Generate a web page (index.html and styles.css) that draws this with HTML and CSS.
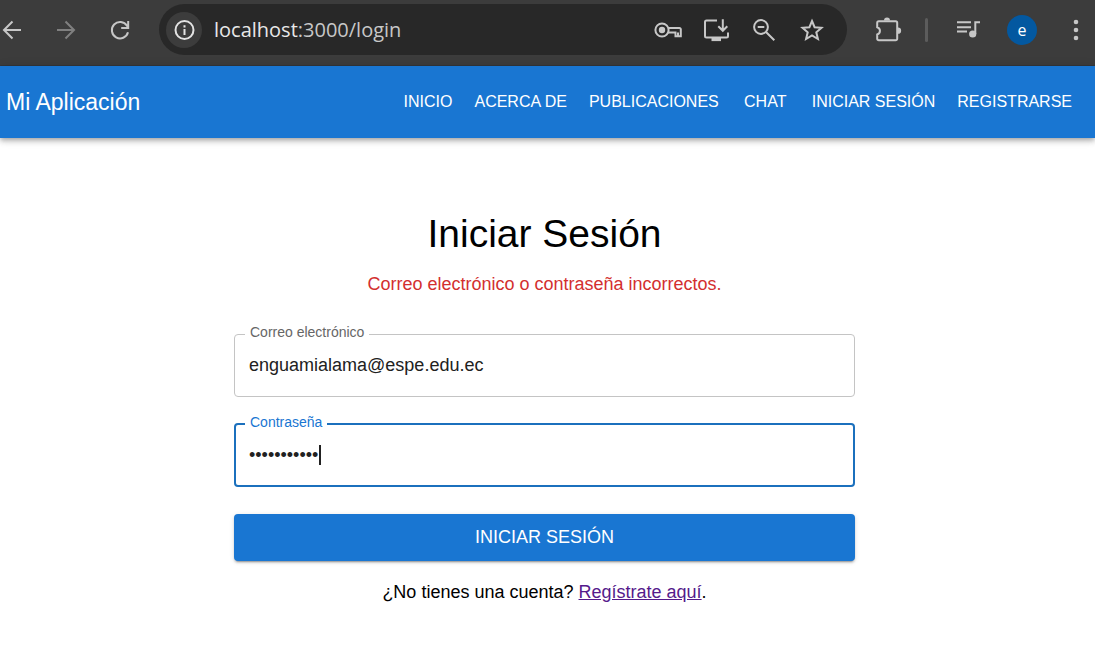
FILE: index.html
```html
<!DOCTYPE html>
<html lang="es">
<head>
<meta charset="utf-8">
<meta name="viewport" content="width=device-width, initial-scale=1">
<title>Iniciar Sesión - Mi Aplicación</title>
<link rel="stylesheet" href="styles.css">
</head>
<body>
<div class="browser-bar">
  <div class="history">
    <button class="icon-btn" type="button" aria-label="Atrás">
      <svg class="icon" viewBox="0 0 24 24"><path d="M21 12H4.500M12.500 3.500L4 12l8.500 8.500"/></svg>
    </button>
    <button class="icon-btn icon-btn-off" type="button" aria-label="Adelante" disabled>
      <svg class="icon" viewBox="0 0 24 24"><path d="M3 12h16.500M11.500 3.500L20 12l-8.500 8.500"/></svg>
    </button>
    <button class="icon-btn" type="button" aria-label="Recargar">
      <svg class="icon" viewBox="0 0 24 24"><path d="M20 14.300A8.200 8.200 0 1 1 19 7.800L20 9.500M20.200 3v7h-7"/></svg>
    </button>
  </div>
  <div class="omnibox">
    <button class="site-info" type="button" aria-label="Información del sitio">
      <svg class="icon" viewBox="0 0 24 24"><circle cx="12.500" cy="12" r="9"/><path d="M12.500 11v6M12.500 7.200v2.200"/></svg>
    </button>
    <div class="url"><span class="url-host">localhost</span>:3000/login</div>
    <button class="icon-btn-lg" type="button" aria-label="Contraseñas">
      <svg class="icon-lg" viewBox="0 0 28 28"><circle cx="8" cy="14" r="6.600"/><circle class="solid" cx="8" cy="14" r="3.200"/><path d="M14.300 12H25.500a1.300 1.300 0 0 1 1.300 1.300V20.300H21.500V16.500H14.200M24 16.500v3.500"/></svg>
    </button>
    <button class="icon-btn-lg" type="button" aria-label="Instalar aplicación">
      <svg class="icon-lg" viewBox="0 0 28 28"><path d="M15 4.500H4.500a1.500 1.500 0 0 0-1.500 1.500v14a1.500 1.500 0 0 0 1.500 1.500h20a1.500 1.500 0 0 0 1.500-1.500v-3.500M20.800 3.300v11M16.300 10.300l4.500 4.500 4.500-4.500"/><path class="solid" d="M9.500 21.500h9.500v3.600h-9.500z"/></svg>
    </button>
    <button class="icon-btn-lg" type="button" aria-label="Zoom">
      <svg class="icon-lg" viewBox="0 0 28 28"><circle cx="11" cy="11" r="6.900"/><path d="M7.700 11h6.600M16 16l8.300 8.300"/></svg>
    </button>
    <button class="icon-btn-lg" type="button" aria-label="Añadir a marcadores">
      <svg class="icon-lg" viewBox="0 0 28 28"><path d="M14 5l2.600 6.200 6.900.600-5.200 4.500 1.600 6.700L14 19.400l-5.900 3.600 1.600-6.700-5.200-4.500 6.900-.600z"/></svg>
    </button>
  </div>
  <div class="tools">
    <button class="icon-btn-lg" type="button" aria-label="Extensiones">
      <svg class="icon-lg" viewBox="0 0 28 28"><path d="M4.700 5.300H21.700a1.500 1.500 0 0 1 1.500 1.500V22.700a1.500 1.500 0 0 1-1.500 1.500H4.700a1.500 1.500 0 0 1-1.500-1.500V18.500a3.800 3.800 0 0 0 0-7.300V6.800a1.500 1.500 0 0 1 1.500-1.500z"/><path class="solid" d="M10 4.600a3 3 0 0 1 6 0zM24 11.500a3 3 0 0 1 0 6.300z"/></svg>
    </button>
    <span class="divider"></span>
    <button class="icon-btn" type="button" aria-label="Control multimedia">
      <svg class="icon" viewBox="0 0 24 24"><path d="M1 4.200h14M1 9.200h14M1 13.500h10M19.300 16V4.200H24"/><circle class="solid" cx="16.700" cy="16" r="3.600"/></svg>
    </button>
    <button class="avatar" type="button" aria-label="Perfil">e</button>
    <button class="icon-btn" type="button" aria-label="Menú">
      <svg class="icon" viewBox="0 0 24 24"><circle class="solid" cx="12" cy="4" r="2.300"/><circle class="solid" cx="12" cy="12" r="2.300"/><circle class="solid" cx="12" cy="20" r="2.300"/></svg>
    </button>
  </div>
</div>

<header class="app-bar">
  <div class="brand">Mi Aplicación</div>
  <nav class="nav">
    <a class="nav-link" href="#inicio">INICIO</a>
    <a class="nav-link" href="#acerca">ACERCA DE</a>
    <a class="nav-link" href="#publicaciones">PUBLICACIONES</a>
    <a class="nav-link" href="#chat">CHAT</a>
    <a class="nav-link" href="#login">INICIAR SESIÓN</a>
    <a class="nav-link" href="#registro">REGISTRARSE</a>
  </nav>
</header>

<main class="page">
  <form class="login">
    <h1 class="title">Iniciar Sesión</h1>
    <p class="error" role="alert">Correo electrónico o contraseña incorrectos.</p>
    <div class="fields">
      <div class="field">
        <label class="field-label" for="email">Correo electrónico</label>
        <input class="field-input" id="email" type="email" value="enguamialama@espe.edu.ec">
      </div>
      <div class="field field-active">
        <label class="field-label" for="password">Contraseña</label>
        <input class="field-input" id="password" type="password" value="contrasenia">
        <span class="caret"></span>
      </div>
    </div>
    <button class="submit" type="submit">INICIAR SESIÓN</button>
    <p class="signup">¿No tienes una cuenta? <a class="signup-link" href="#registro">Regístrate aquí</a>.</p>
  </form>
</main>
</body>
</html>
```

FILE: styles.css
```css
* {
  box-sizing: border-box;
}

body {
  margin: 0;
  background: #fff;
  color: #000;
  font-family: "Liberation Sans", Arial, sans-serif;
  font-size: 18px;
}

button {
  border: 0;
  padding: 0;
  background: none;
  font-family: inherit;
}

/* Browser toolbar */
.browser-bar {
  display: flex;
  align-items: center;
  gap: 27px;
  padding: 4px 7px 10px 0;
  border-bottom: 1px solid #34373b;
  background: #3c3c3c;
  color: #c7c7c7;
}

.history {
  display: flex;
  gap: 30px;
}

.icon-btn,
.icon-btn-lg {
  display: flex;
  color: #c7c7c7;
}

.icon-btn-off {
  color: #808080;
}

.icon,
.icon-lg {
  display: block;
  width: 24px;
  height: 24px;
  fill: none;
  stroke: currentColor;
  stroke-width: 2;
}

.icon-lg {
  width: 28px;
  height: 28px;
}

.solid {
  fill: currentColor;
  stroke: none;
}

.omnibox {
  display: flex;
  flex: 1;
  align-items: center;
  gap: 20px;
  height: 51px;
  padding: 0 21px 0 7px;
  border-radius: 26px;
  background: #282828;
}

.site-info {
  display: grid;
  place-items: center;
  width: 36px;
  height: 36px;
  margin-right: -8px;
  border-radius: 50%;
  background: #3c3c3c;
  color: #e3e3e3;
}

.url {
  flex: 1;
  font-family: "Open Sans", "Noto Sans", sans-serif;
  font-size: 20px;
  white-space: nowrap;
}

.url-host {
  color: #e8e8e8;
}

.tools {
  display: flex;
  align-items: center;
  gap: 27px;
}

.divider {
  width: 3px;
  height: 24px;
  margin: 0 1px 0 -4px;
  border-radius: 2px;
  background: #5c5c5c;
}

.avatar {
  width: 30px;
  height: 30px;
  border-radius: 50%;
  background: #0358a0;
  color: #fff;
  font-family: "Open Sans", "Noto Sans", sans-serif;
  font-size: 16px;
  line-height: 28px;
}

/* Application bar */
.app-bar {
  display: flex;
  align-items: center;
  justify-content: space-between;
  min-height: 72px;
  padding: 0 12px 0 6px;
  background: #1976d2;
  box-shadow: 0 2px 4px -1px rgba(0, 0, 0, 0.2), 0 4px 5px rgba(0, 0, 0, 0.14), 0 1px 10px rgba(0, 0, 0, 0.12);
  color: #fff;
}

.brand {
  font-size: 23px;
  line-height: 28px;
}

.nav {
  display: flex;
}

.nav-link {
  min-width: 71px;
  padding: 8px 11px;
  color: #fff;
  font-size: 16px;
  line-height: 20px;
  text-align: center;
  text-decoration: none;
  white-space: nowrap;
}

/* Login form */
.page {
  padding: 72px 22px 24px 16px;
}

.login {
  max-width: 621px;
  margin: 0 auto;
  text-align: center;
}

.title {
  margin: 0;
  font-size: 39px;
  font-weight: 400;
  line-height: 48px;
}

.error {
  margin: 13px 0 37px;
  color: #d32f2f;
  line-height: 26px;
}

.fields {
  display: grid;
  gap: 26px;
}

.field {
  position: relative;
}

.field-label {
  position: absolute;
  top: -10px;
  left: 11px;
  padding: 0 5px;
  background: #fff;
  color: #666;
  font-size: 14px;
  line-height: 16px;
}

.field-input {
  display: block;
  width: 100%;
  height: 63px;
  padding: 0 14px;
  border: 1px solid #c4c4c4;
  border-radius: 4px;
  outline: 0;
  background: #fff;
  color: #212121;
  font-family: inherit;
  font-size: 18px;
}

.field-active .field-label {
  top: -9px;
  color: #1976d2;
}

.field-active .field-input {
  height: 64px;
  padding: 0 13px;
  border: 2px solid #1b70bd;
}

.caret {
  position: absolute;
  top: 22px;
  left: 85px;
  width: 2px;
  height: 20px;
  background: #212121;
}

.submit {
  display: block;
  width: 100%;
  margin-top: 27px;
  padding: 12px 16px;
  border-radius: 4px;
  background: #1976d2;
  box-shadow: 0 3px 1px -2px rgba(0, 0, 0, 0.2), 0 2px 2px rgba(0, 0, 0, 0.14), 0 1px 5px rgba(0, 0, 0, 0.12);
  color: #fff;
  font-size: 18px;
  line-height: 23px;
}

.signup {
  margin: 18px 0 0;
  line-height: 26px;
}

.signup-link {
  color: #551a8b;
}
```
